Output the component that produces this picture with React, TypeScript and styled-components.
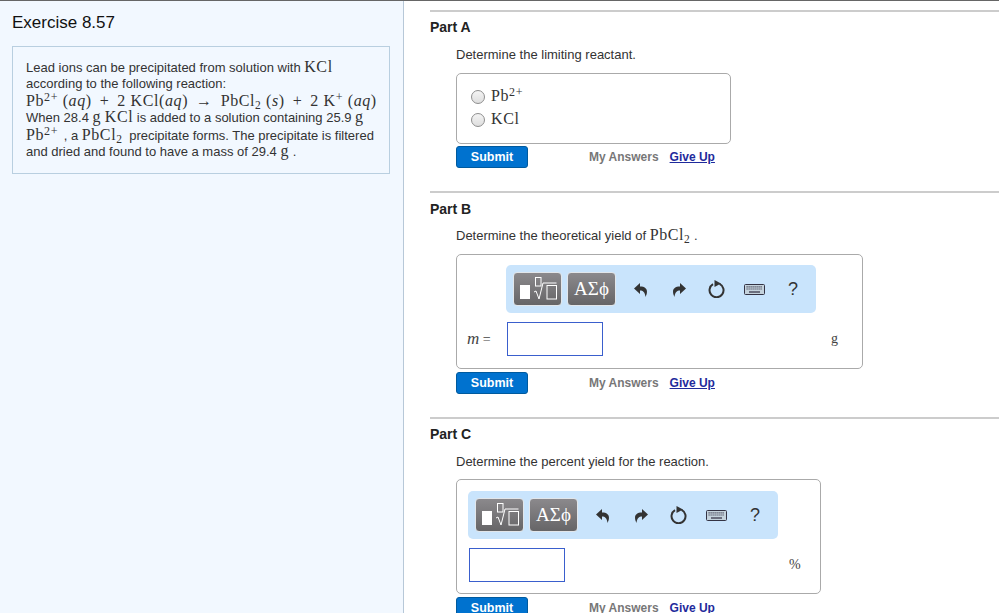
import React from "react";
import styled, { createGlobalStyle } from "styled-components";

const Global = createGlobalStyle`
  html, body { margin: 0; padding: 0; background: #fff; overflow: hidden; }
  body { font-family: "Liberation Sans", Arial, sans-serif; color: #222; }
`;

const Page = styled.div`
  width: 999px; height: 613px; overflow: hidden; display: flex;
  border-top: 1px solid #666; box-sizing: border-box;
`;
const Sidebar = styled.aside`
  width: 404px; flex: none; box-sizing: border-box; background: #f2f8ff;
  border-right: 1px solid #b7c8d8; padding: 12px 14px 0 12px;
`;
const Heading = styled.h1`
  margin: 0 0 13px; font-size: 17px; line-height: 20px; font-weight: 400; color: #111;
`;
const Problem = styled.div`
  border: 1px solid #b9cfe0; width: 378px; height: 128px; box-sizing: border-box; padding: 11px 13px;
  font-size: 13px; line-height: 17px; color: #333;
`;
const Line = styled.div<{ $h?: number }>`white-space: nowrap; height: ${(p) => p.$h ?? 17}px;`;
const M = styled.span`
  font-family: "Liberation Serif", "Times New Roman", serif; font-size: 16px; letter-spacing: 0.6px; color: #333;
`;
const I = styled.i`font-family: "Liberation Serif", serif;`;
const Sup = styled.sup`font-size: 12px; line-height: 0; vertical-align: 5px;`;
const Sub = styled.sub`font-size: 11.5px; line-height: 0; vertical-align: -3px;`;
const Gap = styled.span<{ $w: number }>`display: inline-block; width: ${(p) => p.$w}px;`;

const Main = styled.main`flex: 1; padding: 9px 0 0 26px; min-width: 0;`;
const Part = styled.section<{ $h: number }>`
  border-top: 2px solid #ccc; height: ${(p) => p.$h}px;
`;
const PartTitle = styled.h2<{ $top: number }>`
  margin: ${(p) => p.$top}px 0 0; font-size: 14px; line-height: 17px; font-weight: 700; color: #222;
`;
const Body = styled.div`margin-left: 26px;`;
const Prompt = styled.p<{ $top: number; $bottom: number }>`
  margin: ${(p) => p.$top}px 0 ${(p) => p.$bottom}px; font-size: 13px; line-height: 17px; color: #333; white-space: nowrap;
`;
const AnswerBox = styled.div<{ $w: number; $h: number }>`
  width: ${(p) => p.$w}px; height: ${(p) => p.$h}px; box-sizing: border-box;
  border: 1px solid #aaa; border-radius: 5px; position: relative;
`;
const Choices = styled.div`padding: 11px 0 0 14px; display: flex; flex-direction: column; gap: 2px;`;
const Choice = styled.label`display: flex; align-items: center; gap: 6px; height: 21px;`;
const Radio = styled.span`
  width: 12px; height: 12px; border-radius: 50%; border: 1px solid #8e8e8e;
  background: linear-gradient(#f4f4f4, #dedede); margin-top: 3px; flex: none;
`;
const Toolbar = styled.div<{ $left: number; $top: number }>`
  width: 310px; height: 48px; box-sizing: border-box; margin: ${(p) => p.$top}px 0 0 ${(p) => p.$left}px;
  background: #c9e4fc; border-radius: 5px; display: flex; align-items: center; padding: 0 0 0 7px;
`;
const Palette = styled.div`
  width: 49px; height: 34px; box-sizing: border-box; margin-right: 5px; flex: none;
  border: 1px solid #e2e6ea; border-radius: 4px; background: linear-gradient(#8b898c, #666567);
  display: flex; align-items: center; justify-content: center; color: #fff;
  font-family: "Liberation Serif", serif; font-size: 19px;
`;
const Tool = styled.span<{ $w: number }>`
  width: ${(p) => p.$w}px; flex: none; display: flex; justify-content: center; align-items: center;
  color: #333; font-size: 18px;
`;
const InputRow = styled.div<{ $left: number; $top: number }>`
  display: flex; align-items: center; margin: ${(p) => p.$top}px 0 0 ${(p) => p.$left}px; position: relative;
`;
const Label = styled.span`
  width: 40px; flex: none; font-family: "Liberation Serif", serif; font-size: 14px; letter-spacing: 0.5px; color: #444;
`;
const LabelVar = styled.i`
  font-family: "Liberation Serif", serif; font-size: 17px; margin-right: 3px;
`;
const Field = styled.div`
  width: 96px; height: 34px; box-sizing: border-box; border: 1px solid #3a5fcd; background: #fff;
`;
const Unit = styled.span<{ $left: number }>`
  margin-left: ${(p) => p.$left}px; font-family: "Liberation Serif", serif; font-size: 14px; color: #444;
`;
const Actions = styled.div<{ $top: number }>`
  display: flex; align-items: center; margin-top: ${(p) => p.$top}px; height: 22px;
`;
const Submit = styled.button`
  width: 72px; height: 22px; box-sizing: border-box; padding: 0; flex: none;
  border: 1px solid #005a9e; border-radius: 3px; background: #0072cf; color: #fff;
  font: 700 12.5px/20px "Liberation Sans", Arial, sans-serif;
`;
const Muted = styled.span`margin-left: 61px; font-size: 12px; font-weight: 700; color: #777; white-space: nowrap;`;
const GiveUp = styled.a`
  margin-left: 11px; font-size: 12px; font-weight: 700; color: #1f2a9c; text-decoration: underline; white-space: nowrap;
`;

const RootGlyph = () => (
  <svg width="38" height="24" viewBox="0 0 38 24" fill="none">
    <rect x="1" y="8" width="10" height="14" fill="#fff" />
    <rect x="16.5" y="0.5" width="5.5" height="8.5" stroke="#fff" strokeWidth="1" fill="none" />
    <path d="M15 15l2 -1 3 8 4 -16h13.5" stroke="#fff" strokeWidth="1" fill="none" />
    <rect x="28" y="8.5" width="9.5" height="13.5" stroke="#fff" strokeWidth="1" fill="none" />
  </svg>
);
const ReplyArrow = ({ flip }: { flip?: boolean }) => (
  <svg width="14" height="15" viewBox="0 0 14 15" style={flip ? { transform: "scaleX(-1)" } : undefined}>
    <path d="M6 1L0 6.5 6 12V8.5C9 8.5 11 10 11.5 15 14.5 9 13 4.5 6 4.5Z" fill="#333" />
  </svg>
);
const Reset = () => (
  <svg width="17" height="18" viewBox="0 0 17 18" fill="none">
    <path d="M5 4.2a7 7 0 1 0 6.5 -.3" stroke="#333" strokeWidth="2" />
    <path d="M6.5 0l6.5 3.6-6.5 3.4z" fill="#333" />
  </svg>
);
const KeyboardIcon = () => (
  <svg width="21" height="11" viewBox="0 0 21 11">
    <rect x=".5" y=".5" width="20" height="10" rx="1" fill="#c4d2dc" stroke="#334" />
    <path d="M2.5 2.8h16M2.5 5h16" stroke="#445" strokeWidth="1.2" strokeDasharray="1.2 .8" />
    <path d="M5 8h11" stroke="#445" strokeWidth="1.4" />
  </svg>
);

const EditorBar = ({ left, top }: { left: number; top: number }) => (
  <Toolbar $left={left} $top={top}>
    <Palette><RootGlyph /></Palette>
    <Palette>ΑΣϕ</Palette>
    <Tool $w={40}><ReplyArrow /></Tool>
    <Tool $w={36}><ReplyArrow flip /></Tool>
    <Tool $w={38}><Reset /></Tool>
    <Tool $w={39}><KeyboardIcon /></Tool>
    <Tool $w={38}>?</Tool>
  </Toolbar>
);
const ActionRow = ({ top }: { top: number }) => (
  <Actions $top={top}>
    <Submit>Submit</Submit>
    <Muted>My Answers</Muted>
    <GiveUp href="#">Give Up</GiveUp>
  </Actions>
);

export default function App() {
  return (
    <Page>
      <Global />
      <Sidebar>
        <Heading>Exercise 8.57</Heading>
        <Problem>
          <Line>Lead ions can be precipitated from solution with <M>KCl</M></Line>
          <Line>according to the following reaction:</Line>
          <Line $h={16}>
            <M>Pb<Sup>2+</Sup> (<I>aq</I>) <Gap $w={3.4} />+<Gap $w={3.4} /> 2 KCl(<I>aq</I>) <Gap $w={3.4} />→<Gap $w={3.4} /> PbCl<Sub>2</Sub> (<I>s</I>) <Gap $w={3.4} />+<Gap $w={3.4} /> 2 K<Sup>+</Sup> (<I>aq</I>)</M>
          </Line>
          <Line $h={18}>When 28.4 <M>g</M> <M>KCl</M> is added to a solution containing 25.9 <M>g</M></Line>
          <Line $h={16}><M>Pb<Sup>2+</Sup></M><Gap $w={2} /> , a <M>PbCl<Sub>2</Sub></M><Gap $w={3} /> precipitate forms. The precipitate is filtered</Line>
          <Line>and dried and found to have a mass of 29.4 <M>g</M> .</Line>
        </Problem>
      </Sidebar>
      <Main>
        <Part $h={179}>
          <PartTitle $top={7}>Part A</PartTitle>
          <Body>
            <Prompt $top={10} $bottom={10}>Determine the limiting reactant.</Prompt>
            <AnswerBox $w={275} $h={71}>
              <Choices>
                <Choice><Radio /><M>Pb<Sup>2+</Sup></M></Choice>
                <Choice><Radio /><M>KCl</M></Choice>
              </Choices>
            </AnswerBox>
            <ActionRow top={2} />
          </Body>
        </Part>
        <Part $h={224}>
          <PartTitle $top={8}>Part B</PartTitle>
          <Body>
            <Prompt $top={8} $bottom={10}>Determine the theoretical yield of <M>PbCl<Sub>2</Sub></M> .</Prompt>
            <AnswerBox $w={407} $h={115}>
              <EditorBar left={49} top={10} />
              <InputRow $left={10} $top={9}>
                <Label><LabelVar>m</LabelVar>=</Label>
                <Field />
                <Unit $left={228}>g</Unit>
              </InputRow>
            </AnswerBox>
            <ActionRow top={3} />
          </Body>
        </Part>
        <Part $h={200}>
          <PartTitle $top={7}>Part C</PartTitle>
          <Body>
            <Prompt $top={10} $bottom={9}>Determine the percent yield for the reaction.</Prompt>
            <AnswerBox $w={365} $h={115}>
              <EditorBar left={11} top={11} />
              <InputRow $left={12} $top={9}>
                <Field />
                <Unit $left={224}>%</Unit>
              </InputRow>
            </AnswerBox>
            <ActionRow top={3} />
          </Body>
        </Part>
      </Main>
    </Page>
  );
}
